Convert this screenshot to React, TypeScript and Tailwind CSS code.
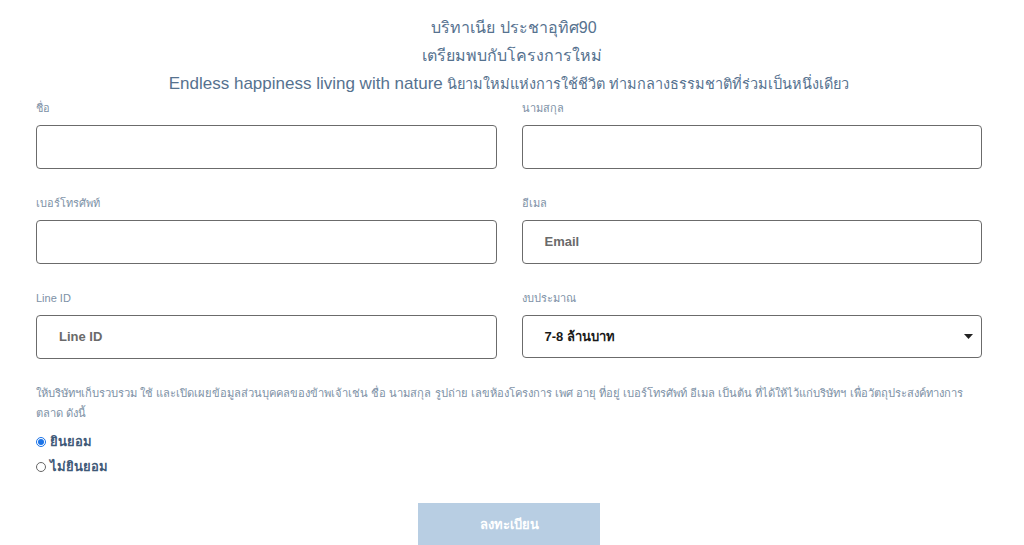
import React from "react";

const font = { fontFamily: '"Liberation Sans", "Noto Sans", sans-serif' };

function Field({ label, placeholder }: { label: string; placeholder?: string }) {
  return (
    <div className="flex flex-col">
      <div className="h-[16px] text-[11px] leading-[16px] text-[#7d91a6]">{label}</div>
      <div className="mt-[9px] h-[44px] rounded-[4px] border border-[#6b6b6b] bg-white flex items-center pl-[22px]">
        {placeholder ? (
          <span className="text-[13px] font-semibold text-[#6a6a6a]">{placeholder}</span>
        ) : null}
      </div>
    </div>
  );
}

export default function App() {
  return (
    <div className="w-[1024px] h-[545px] overflow-hidden bg-white" style={font}>
      <div className="pt-[14px] flex flex-col items-center text-[#56728f] text-[16px] leading-[28px]">
        <div className="pl-[4px]">บริทาเนีย ประชาอุทิศ90</div>
        <div>เตรียมพบกับโครงการใหม่</div>
        <div className="pr-[6px] whitespace-nowrap">
          <span className="text-[17px]">Endless happiness living with nature</span>{" "}
          <span className="text-[14.5px]">นิยามใหม่แห่งการใช้ชีวิต ท่ามกลางธรรมชาติที่ร่วมเป็นหนึ่งเดียว</span>
        </div>
      </div>
      <div className="pl-[36px] pr-[42px] mt-[2px]">
        <div className="grid grid-cols-2 gap-x-[25px] gap-y-[26px]">
          <Field label="ชื่อ" />
          <Field label="นามสกุล" />
          <Field label="เบอร์โทรศัพท์" />
          <Field label="อีเมล" placeholder="Email" />
          <Field label="Line ID" placeholder="Line ID" />
          <div className="flex flex-col">
            <div className="h-[16px] text-[11px] leading-[16px] text-[#7d91a6]">งบประมาณ</div>
            <div className="mt-[9px] h-[43px] rounded-[4px] border border-[#6b6b6b] bg-white flex items-center justify-between pl-[22px] pr-[8px]">
              <span className="text-[13px] font-bold text-[#1a1a1a]">7-8 ล้านบาท</span>
              <svg width="9" height="6" viewBox="0 0 9 6">
                <path d="M0 0 L9 0 L4.5 5 Z" fill="#222" />
              </svg>
            </div>
          </div>
        </div>
        <div className="mt-[24px] text-[11.2px] leading-[20px] text-[#7d91a6]">
          ให้บริษัทฯเก็บรวบรวม ใช้ และเปิดเผยข้อมูลส่วนบุคคลของข้าพเจ้าเช่น ชื่อ นามสกุล รูปถ่าย เลขห้องโครงการ เพศ อายุ ที่อยู่ เบอร์โทรศัพท์ อีเมล เป็นต้น ที่ได้ให้ไว้แก่บริษัทฯ เพื่อวัตถุประสงค์ทางการ
          <br />
          ตลาด ดังนี้
        </div>
        <div className="mt-[6px] flex flex-col text-[13px] font-bold text-[#3f5a78] leading-[25px]">
          <label className="flex items-center gap-[4px]">
            <span className="w-[10px] h-[10px] rounded-full border border-[#1a73e8] flex items-center justify-center">
              <span className="w-[6px] h-[6px] rounded-full bg-[#1a73e8]" />
            </span>
            ยินยอม
          </label>
          <label className="flex items-center gap-[4px]">
            <span className="w-[10px] h-[10px] rounded-full border border-[#666]" />
            ไม่ยินยอม
          </label>
        </div>
      </div>
      <div className="mt-[24px] flex justify-center pr-[6px]">
        <div className="w-[182px] h-[44px] bg-[#b8cee3] text-white font-bold text-[13px] flex items-center justify-center">
          ลงทะเบียน
        </div>
      </div>
    </div>
  );
}
